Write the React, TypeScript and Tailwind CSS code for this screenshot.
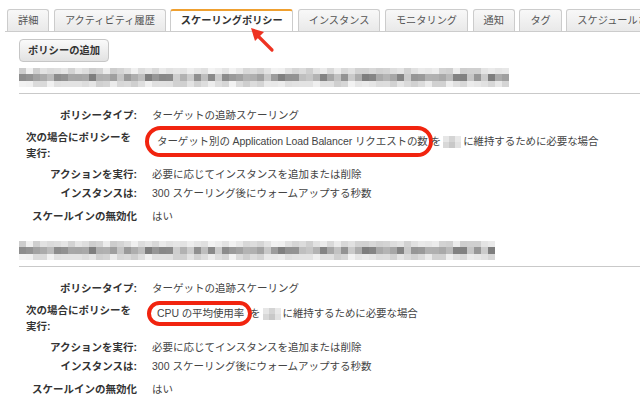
import React from 'react';

const tabs = [
  { label: '詳細' },
  { label: 'アクティビティ履歴' },
  { label: 'スケーリングポリシー', active: true },
  { label: 'インスタンス' },
  { label: 'モニタリング' },
  { label: '通知' },
  { label: 'タグ' },
  { label: 'スケジュールされたアクション' },
];

// pseudo random grays for the pixelated (redacted) policy name
const shade = (i: number, row: number) => {
  const n = Math.abs(Math.sin(i * 12.9898 + row * 78.233) * 43758.5453) % 1;
  if (row === 1) return Math.round(125 + n * 85);
  return Math.round(205 + n * 38);
};

function Mosaic({ cols }: { cols: number }) {
  const rows = [6, 7, 6];
  return (
    <div className="flex flex-col">
      {rows.map((h, r) => (
        <div key={r} className="flex">
          {Array.from({ length: cols }).map((_, i) => {
            const g = shade(i, r);
            return <div key={i} className="w-[7px]" style={{ height: h, background: `rgb(${g},${g},${g})` }} />;
          })}
        </div>
      ))}
    </div>
  );
}

function Blot() {
  return (
    <span className="inline-flex flex-col mx-[2px] align-middle">
      <span className="flex">
        <span className="w-[6px] h-[6px] bg-[#e6e6e6]" />
        <span className="w-[6px] h-[6px] bg-[#d4d4d4]" />
        <span className="w-[6px] h-[6px] bg-[#e9e9e9]" />
      </span>
      <span className="flex">
        <span className="w-[6px] h-[6px] bg-[#d8d8d8]" />
        <span className="w-[6px] h-[6px] bg-[#c8c8c8]" />
        <span className="w-[6px] h-[6px] bg-[#e2e2e2]" />
      </span>
    </span>
  );
}

function Row({ label, children, className = '' }: { label: React.ReactNode; children: React.ReactNode; className?: string }) {
  return (
    <div className={`flex items-start ${className}`}>
      <div className="w-[118px] flex justify-end font-bold text-[#333] leading-[16px]">{label}</div>
      <div className="ml-[15px] text-[#444] leading-[16px]">{children}</div>
    </div>
  );
}

function Policy({ metric, big, cols }: { metric: string; big?: boolean; cols: number }) {
  return (
    <div>
      <div className="h-[19px] overflow-hidden">
        <Mosaic cols={cols} />
      </div>
      <div className="mt-[6px] h-px bg-[#c9c9c9] mr-[-20px]" />
      <Row label="ポリシータイプ:" className="mt-[13px]">ターゲットの追跡スケーリング</Row>
      <div className="flex items-start mt-[6px]">
        <div className="w-[118px] pl-[7px] font-bold text-[#333] leading-[16px]">
          次の場合にポリシーを
          <br />
          実行:
        </div>
        <div className={`flex items-center whitespace-nowrap text-[#444] tracking-[-0.1px] ${big ? 'ml-[8px] -mt-[3px]' : 'ml-[10px] -mt-[1px]'}`}>
          <span
            className={`flex items-center rounded-full border-[4px] border-[#f1240f] ${big ? 'h-[31px] pl-[8px] pr-[1px]' : 'h-[25px] pl-[6px] pr-[4px]'}`}
          >
            {metric}
          </span>
          <span className="-ml-[2px]">を</span>
          <Blot />
          <span>に維持するために必要な場合</span>
        </div>
      </div>
      <Row label="アクションを実行:" className="mt-[5px]">必要に応じてインスタンスを追加または削除</Row>
      <Row label="インスタンスは:" className="mt-[3px]">300 スケーリング後にウォームアップする秒数</Row>
      <Row label="スケールインの無効化" className="mt-[7px]">はい</Row>
    </div>
  );
}

export default function App() {
  return (
    <div className="relative w-[640px] h-[408px] overflow-hidden bg-white text-[10.5px] font-['Liberation_Sans','Noto_Sans_CJK_JP',sans-serif]">
      {/* Tabs */}
      <div className="pt-[9px] pl-[5px]">
        <div className="flex border-b border-[#cccccc] pl-[2px] gap-[4.5px] whitespace-nowrap text-[10.2px]">
          {tabs.map((t) =>
            t.active ? (
              <div
                key={t.label}
                className="h-[22px] -mb-px px-[9.5px] flex items-center bg-white border border-b-0 border-[#cccccc] border-t-2 border-t-[#efa030] rounded-t-[3px] font-bold text-[#333]"
              >
                {t.label}
              </div>
            ) : (
              <div
                key={t.label}
                className="h-[22px] px-[10px] flex items-center bg-gradient-to-b from-[#f8f8f8] to-[#e9e9e9] border border-b-0 border-[#cccccc] rounded-t-[3px] text-[#555]"
              >
                {t.label}
              </div>
            )
          )}
        </div>
      </div>

      <div className="pl-[19px] pr-0">
        <button className="mt-[7px] h-[23px] px-[8px] rounded-[4px] border border-[#c6c6c6] bg-gradient-to-b from-[#fafafa] to-[#e2e2e2] font-bold text-[#333] text-[10.3px]">
          ポリシーの追加
        </button>
        <div className="mt-[6px]">
          <Policy metric="ターゲット別の Application Load Balancer リクエストの数" big cols={70} />
        </div>
        <div className="mt-[17px]">
          <Policy metric="CPU の平均使用率" cols={68} />
        </div>
      </div>

      {/* annotation arrow */}
      <svg className="absolute left-[244px] top-[23px]" width="34" height="32" viewBox="0 0 34 32">
        <line x1="28" y1="27" x2="13" y2="12" stroke="#ee3322" strokeWidth="3.2" strokeLinecap="round" />
        <polygon points="7,5 20,9 11,18" fill="#ee3322" />
      </svg>
    </div>
  );
}
